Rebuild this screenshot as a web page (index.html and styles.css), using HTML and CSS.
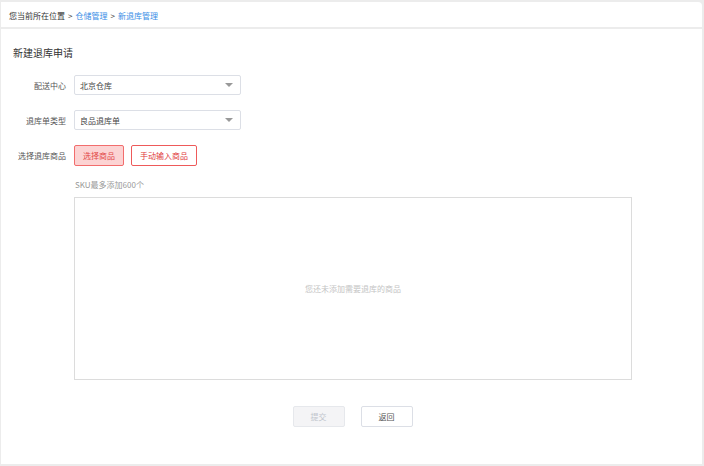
FILE: index.html
```html
<!DOCTYPE html>
<html lang="zh-CN">
<head>
    <meta charset="UTF-8">
    <title>新建退库申请</title>
    <link rel="stylesheet" href="styles.css">
</head>
<body>
    <div class="crumbs">
        <span>您当前所在位置</span>
        <span class="sep">&gt;</span>
        <a href="#">仓储管理</a>
        <span class="sep">&gt;</span>
        <a href="#">新退库管理</a>
    </div>

    <div class="panel">
        <h2 class="title">新建退库申请</h2>

        <div class="form-row">
            <label class="label">配送中心</label>
            <div class="select">
                <span>北京仓库</span>
                <i class="arrow"></i>
            </div>
        </div>

        <div class="form-row">
            <label class="label">退库单类型</label>
            <div class="select">
                <span>良品退库单</span>
                <i class="arrow"></i>
            </div>
        </div>

        <div class="form-row">
            <label class="label">选择退库商品</label>
            <button class="btn btn-pick">选择商品</button>
            <button class="btn btn-manual">手动输入商品</button>
        </div>

        <div class="goods">
            <p class="tip">SKU最多添加600个</p>
            <div class="goods-box">您还未添加需要退库的商品</div>
        </div>

        <div class="actions">
            <button class="btn-act disabled" disabled>提交</button>
            <button class="btn-act">返回</button>
        </div>
    </div>
</body>
</html>
```

FILE: styles.css
```css
* {
    box-sizing: border-box;
}
body {
    margin: 0;
    background-color: #ececec;
    font-family: "Noto Sans CJK SC", "Liberation Sans", sans-serif;
    font-size: 8px;
    color: #333;
    height: 466px;
    display: flex;
    flex-direction: column;
}
.crumbs {
    margin: 2px 2px 0 1px;
    height: 25px;
    background: white;
    border-radius: 0 4px 0 0;
    display: flex;
    align-items: center;
    gap: 3px;
    padding-left: 8px;
    padding-top: 1px;
    color: #333;
}
.crumbs a {
    color: #3a8ee6;
    text-decoration: none;
}
.panel {
    flex: 1;
    margin: 2px 2px 2px 1px;
    background: white;
    padding: 18px 12px 0 12px;
}
.title {
    margin: 0;
    font-size: 10px;
    font-weight: normal;
    line-height: 12px;
    color: #333;
}
.form-row {
    display: flex;
    align-items: center;
    margin-top: 15px;
    height: 20px;
}
.title + .form-row {
    margin-top: 16px;
}
.label {
    width: 53px;
    margin-right: 8px;
    text-align: right;
    color: #555;
    white-space: nowrap;
}
.select {
    width: 167px;
    height: 20px;
    border: 1px solid #dcdfe6;
    border-radius: 2px;
    display: flex;
    align-items: center;
    justify-content: space-between;
    padding: 0 6px 0 5px;
    color: #444;
}
.arrow {
    width: 0;
    height: 0;
    border-left: 4px solid transparent;
    border-right: 4px solid transparent;
    border-top: 4px solid #999;
    margin-right: 1px;
}
.btn {
    height: 21px;
    padding: 0 8px;
    border-radius: 2px;
    font-family: inherit;
    font-size: 8px;
    cursor: pointer;
    margin-right: 7px;
}
.btn-pick {
    width: 50px;
    background: #fcd3d3;
    border: 1px solid #f26d6d;
    color: #e24848;
}
.btn-manual {
    width: 66px;
    background: white;
    border: 1px solid #ee5a5a;
    color: #e03a3a;
}
.goods {
    margin-left: 61px;
    margin-top: 14px;
}
.tip {
    margin: 0;
    line-height: 12px;
    color: #999;
    padding-left: 1px;
}
.goods-box {
    margin-top: 6px;
    width: 558px;
    height: 183px;
    border: 1px solid #dcdcdc;
    display: flex;
    align-items: center;
    justify-content: center;
    color: #c4c4c4;
    padding-bottom: 1px;
}
.actions {
    display: flex;
    justify-content: center;
    gap: 16px;
    margin-top: 26px;
    padding-left: 2px;
}
.btn-act {
    width: 52px;
    height: 21px;
    background: white;
    border: 1px solid #dcdfe6;
    border-radius: 2px;
    font-family: inherit;
    font-size: 8px;
    color: #555;
    cursor: pointer;
}
.btn-act.disabled {
    background: #f4f4f6;
    border-color: #e6e8ec;
    color: #c0c4cc;
    cursor: not-allowed;
}
```
